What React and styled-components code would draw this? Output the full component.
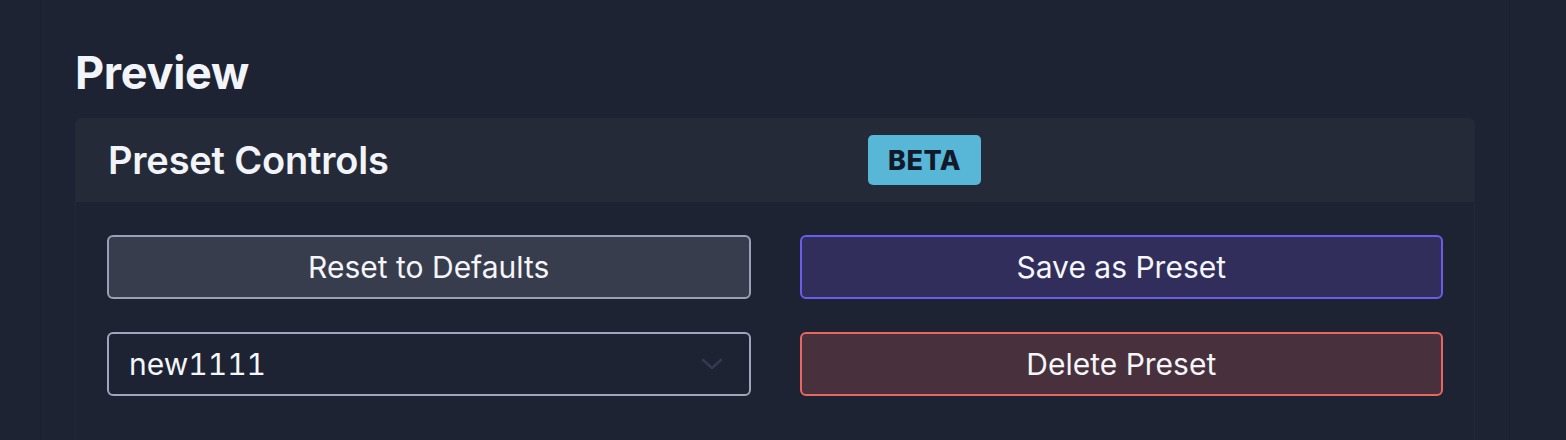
import React from "react";
import styled, { createGlobalStyle } from "styled-components";

const GlobalStyle = createGlobalStyle`
  html, body {
    margin: 0;
    padding: 0;
    background: #1e2333;
    font-family: Inter, "Noto Sans", sans-serif;
    color: #f1f4f9;
  }
`;

const Page = styled.div`
  height: 440px;
  overflow: hidden;
  padding-left: 40px;
`;

const Column = styled.div`
  width: 1400px;
  height: 100%;
  padding: 42px 34px 0 34px;
  border-left: 1px solid #1b1f2e;
  border-right: 1px solid #1b1f2e;
`;

const Title = styled.h2`
  margin: 0 0 14px 0;
  font-size: 45px;
  font-weight: 700;
  line-height: 62px;
  letter-spacing: -0.3px;
`;

const Card = styled.section`
  border-radius: 5px;
  border: 1px solid #22273a;
  border-top: none;
  height: 400px;
`;

const CardHeader = styled.header`
  height: 84px;
  background: #252a38;
  border-radius: 5px 5px 0 0;
  display: flex;
  align-items: center;
  padding: 0 32px;
`;

const CardTitle = styled.h3`
  margin: 0;
  width: 760px;
  font-size: 38px;
  font-weight: 600;
  letter-spacing: -0.2px;
`;

const Badge = styled.span`
  display: inline-flex;
  align-items: center;
  justify-content: center;
  width: 113px;
  height: 50px;
  border-radius: 5px;
  background: #58b6d6;
  color: #12192b;
  font-size: 27px;
  font-weight: 800;
  letter-spacing: 0.5px;
`;

const CardBody = styled.div`
  display: grid;
  grid-template-columns: 1fr 1fr;
  column-gap: 49px;
  row-gap: 33px;
  padding: 33px 31px 0 31px;
`;

const tones = {
  neutral: { bg: "#383d4e", border: "#9ba1b4" },
  primary: { bg: "#312e5c", border: "#6c5ce7" },
  danger: { bg: "#48313d", border: "#e8675f" },
};

const Button = styled.button`
  height: 64px;
  border-radius: 6px;
  border: 2px solid ${(p) => tones[p.$tone].border};
  background: ${(p) => tones[p.$tone].bg};
  color: #f4f6fa;
  font-family: inherit;
  font-size: 30px;
  font-weight: 400;
  cursor: pointer;
`;

const SelectBox = styled.div`
  height: 64px;
  box-sizing: border-box;
  border-radius: 6px;
  border: 2px solid #9ea6ba;
  background: #1e2333;
  display: flex;
  align-items: center;
  justify-content: space-between;
  padding: 0 26px 0 20px;
  font-size: 30px;
  font-variant-numeric: tabular-nums;
  color: #f4f6fa;
`;

const Chevron = () => (
  <svg width="22" height="12" viewBox="0 0 22 12" fill="none">
    <path
      d="M2 2 L11 10 L20 2"
      stroke="#343a4c"
      strokeWidth="2.6"
      strokeLinecap="round"
      strokeLinejoin="round"
    />
  </svg>
);

export default function App() {
  return (
    <>
      <GlobalStyle />
      <Page>
        <Column>
          <Title>Preview</Title>
          <Card>
            <CardHeader>
              <CardTitle>Preset Controls</CardTitle>
              <Badge>BETA</Badge>
            </CardHeader>
            <CardBody>
              <Button $tone="neutral">Reset to Defaults</Button>
              <Button $tone="primary">Save as Preset</Button>
              <SelectBox>
                <span>new1111</span>
                <Chevron />
              </SelectBox>
              <Button $tone="danger">Delete Preset</Button>
            </CardBody>
          </Card>
        </Column>
      </Page>
    </>
  );
}
